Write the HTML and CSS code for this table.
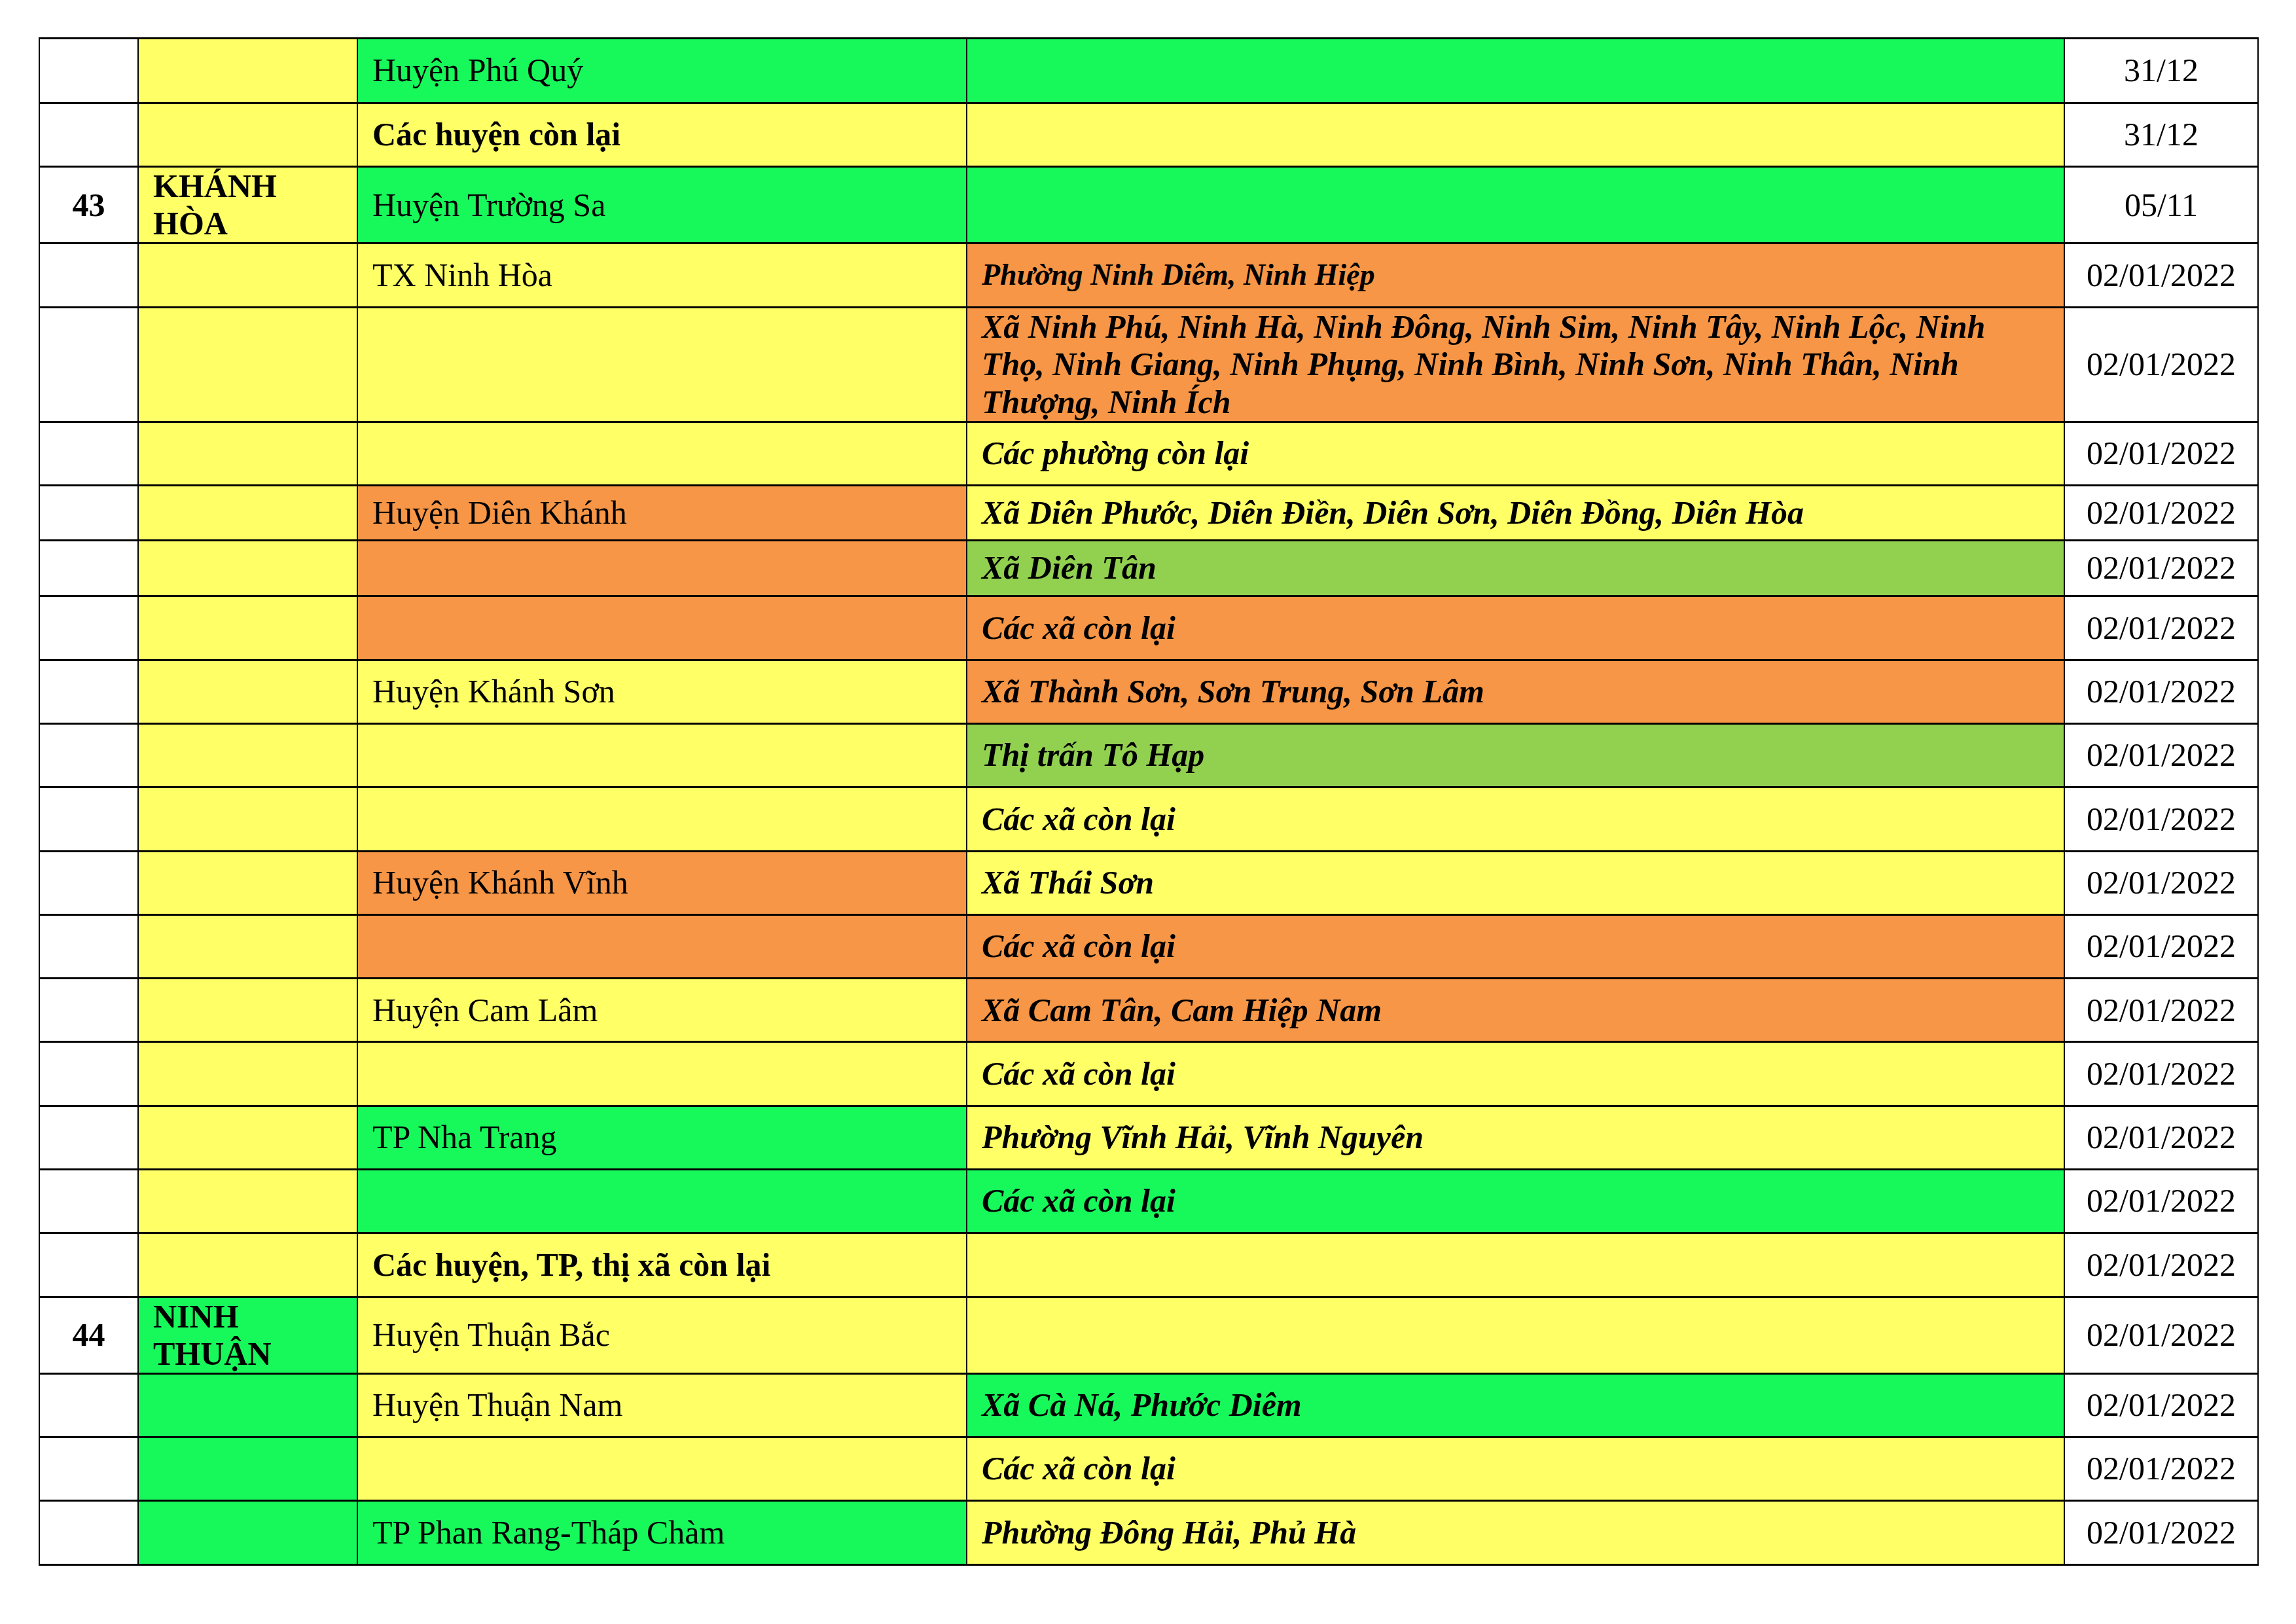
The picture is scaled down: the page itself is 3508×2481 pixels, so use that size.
FILE: index.html
```html
<!DOCTYPE html>
<html lang="vi">
<head>
<meta charset="utf-8">
<title>Danh sách địa phương</title>
<link rel="stylesheet" href="styles.css">
</head>
<body>
<table class="grid">
  <colgroup>
    <col class="c-no">
    <col class="c-prov">
    <col class="c-dist">
    <col class="c-ward">
    <col class="c-date">
  </colgroup>
  <tbody>
    <tr class="r-first">
      <td class="no"></td><td class="prov yellow"></td>
      <td class="dist green">Huyện Phú Quý</td><td class="ward green"></td><td class="date">31/12</td>
    </tr>
    <tr class="r-std">
      <td class="no"></td><td class="prov yellow"></td>
      <td class="dist yellow strong">Các huyện còn lại</td><td class="ward yellow"></td><td class="date">31/12</td>
    </tr>
    <tr class="r-two">
      <td class="no">43</td><td class="prov yellow">KHÁNH HÒA</td>
      <td class="dist green">Huyện Trường Sa</td><td class="ward green"></td><td class="date">05/11</td>
    </tr>
    <tr class="r-std">
      <td class="no"></td><td class="prov yellow"></td>
      <td class="dist yellow">TX Ninh Hòa</td><td class="ward orange small">Phường Ninh Diêm, Ninh Hiệp</td><td class="date">02/01/2022</td>
    </tr>
    <tr class="r-three">
      <td class="no"></td><td class="prov yellow"></td>
      <td class="dist yellow"></td><td class="ward orange">Xã Ninh Phú, Ninh Hà, Ninh Đông, Ninh Sim, Ninh Tây, Ninh Lộc, Ninh Thọ, Ninh Giang, Ninh Phụng, Ninh Bình, Ninh Sơn, Ninh Thân, Ninh Thượng, Ninh Ích</td><td class="date">02/01/2022</td>
    </tr>
    <tr class="r-std">
      <td class="no"></td><td class="prov yellow"></td>
      <td class="dist yellow"></td><td class="ward yellow">Các phường còn lại</td><td class="date">02/01/2022</td>
    </tr>
    <tr class="r-short">
      <td class="no"></td><td class="prov yellow"></td>
      <td class="dist orange">Huyện Diên Khánh</td><td class="ward yellow">Xã Diên Phước, Diên Điền, Diên Sơn, Diên Đồng, Diên Hòa</td><td class="date">02/01/2022</td>
    </tr>
    <tr class="r-short2">
      <td class="no"></td><td class="prov yellow"></td>
      <td class="dist orange"></td><td class="ward lime">Xã Diên Tân</td><td class="date">02/01/2022</td>
    </tr>
    <tr class="r-std">
      <td class="no"></td><td class="prov yellow"></td>
      <td class="dist orange"></td><td class="ward orange">Các xã còn lại</td><td class="date">02/01/2022</td>
    </tr>
    <tr class="r-std">
      <td class="no"></td><td class="prov yellow"></td>
      <td class="dist yellow">Huyện Khánh Sơn</td><td class="ward orange">Xã Thành Sơn, Sơn Trung, Sơn Lâm</td><td class="date">02/01/2022</td>
    </tr>
    <tr class="r-std">
      <td class="no"></td><td class="prov yellow"></td>
      <td class="dist yellow"></td><td class="ward lime">Thị trấn Tô Hạp</td><td class="date">02/01/2022</td>
    </tr>
    <tr class="r-std">
      <td class="no"></td><td class="prov yellow"></td>
      <td class="dist yellow"></td><td class="ward yellow">Các xã còn lại</td><td class="date">02/01/2022</td>
    </tr>
    <tr class="r-std">
      <td class="no"></td><td class="prov yellow"></td>
      <td class="dist orange">Huyện Khánh Vĩnh</td><td class="ward yellow">Xã Thái Sơn</td><td class="date">02/01/2022</td>
    </tr>
    <tr class="r-std">
      <td class="no"></td><td class="prov yellow"></td>
      <td class="dist orange"></td><td class="ward orange">Các xã còn lại</td><td class="date">02/01/2022</td>
    </tr>
    <tr class="r-std">
      <td class="no"></td><td class="prov yellow"></td>
      <td class="dist yellow">Huyện Cam Lâm</td><td class="ward orange">Xã Cam Tân, Cam Hiệp Nam</td><td class="date">02/01/2022</td>
    </tr>
    <tr class="r-std">
      <td class="no"></td><td class="prov yellow"></td>
      <td class="dist yellow"></td><td class="ward yellow">Các xã còn lại</td><td class="date">02/01/2022</td>
    </tr>
    <tr class="r-std">
      <td class="no"></td><td class="prov yellow"></td>
      <td class="dist green">TP Nha Trang</td><td class="ward yellow">Phường Vĩnh Hải, Vĩnh Nguyên</td><td class="date">02/01/2022</td>
    </tr>
    <tr class="r-std">
      <td class="no"></td><td class="prov yellow"></td>
      <td class="dist green"></td><td class="ward green">Các xã còn lại</td><td class="date">02/01/2022</td>
    </tr>
    <tr class="r-std">
      <td class="no"></td><td class="prov yellow"></td>
      <td class="dist yellow strong">Các huyện, TP, thị xã còn lại</td><td class="ward yellow"></td><td class="date">02/01/2022</td>
    </tr>
    <tr class="r-two">
      <td class="no">44</td><td class="prov green">NINH THUẬN</td>
      <td class="dist yellow">Huyện Thuận Bắc</td><td class="ward yellow"></td><td class="date">02/01/2022</td>
    </tr>
    <tr class="r-std">
      <td class="no"></td><td class="prov green"></td>
      <td class="dist yellow">Huyện Thuận Nam</td><td class="ward green">Xã Cà Ná, Phước Diêm</td><td class="date">02/01/2022</td>
    </tr>
    <tr class="r-std">
      <td class="no"></td><td class="prov green"></td>
      <td class="dist yellow"></td><td class="ward yellow">Các xã còn lại</td><td class="date">02/01/2022</td>
    </tr>
    <tr class="r-std">
      <td class="no"></td><td class="prov green"></td>
      <td class="dist green">TP Phan Rang-Tháp Chàm</td><td class="ward yellow">Phường Đông Hải, Phủ Hà</td><td class="date">02/01/2022</td>
    </tr>
  </tbody>
</table>
</body>
</html>
```
FILE: styles.css
```css
html, body {
  margin: 0;
  padding: 0;
  background: #ffffff;
}

body {
  padding: 57px 0 0 59px;
  font-family: "Liberation Serif", "Times New Roman", serif;
  font-size: 50px;
  color: #000000;
}

.grid {
  border-collapse: collapse;
  table-layout: fixed;
  width: 3390px;
  border: 2px solid #000;
}

.c-no { width: 151px; }
.c-prov { width: 335px; }
.c-dist { width: 931px; }
.c-ward { width: 1677px; }
.c-date { width: 296px; }

.grid td {
  border-left: 2px solid #000;
  border-right: 2px solid #000;
  border-top: 3px solid #000;
  border-bottom: 3px solid #000;
  padding: 0 22px;
  vertical-align: middle;
  line-height: 1.15;
  text-align: left;
}

.r-first td { height: 96px; }
.r-std td { height: 94.3px; }
.r-short td { height: 80.5px; }
.r-short2 td { height: 82.5px; }
.r-two td { height: 113px; }
.r-three td { height: 171px; }

.r-two td.prov { line-height: 1.14; }

.grid td.no {
  text-align: center;
  font-weight: bold;
  background: #ffffff;
}

.grid td.prov {
  font-weight: bold;
}

.grid td.ward {
  font-weight: bold;
  font-style: italic;
}

.grid td.small {
  font-size: 46px;
}

.grid td.date {
  text-align: center;
  background: #ffffff;
  padding: 0;
}

.strong { font-weight: bold; }

.yellow { background: #ffff66; }
.green { background: #17f95b; }
.orange { background: #f79646; }
.lime { background: #92d050; }
```
